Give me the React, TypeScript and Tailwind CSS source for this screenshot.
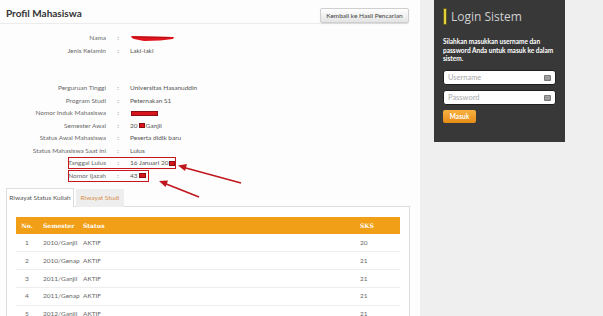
import React from "react";

function RedBlock({ w = 7 }: { w?: number }) {
  return (
    <span
      className="inline-block h-[5px] bg-[#d8141c] border border-[#8a0d12] align-middle mx-[1px]"
      style={{ width: w }}
    />
  );
}

function Scribble() {
  return (
    <svg width="46" height="9" viewBox="0 0 46 9" className="block">
      <path d="M1 2 L44 3 L43 5 L30 6.5 L14 7 L4 5 L2 4 Z" fill="#e0141c" />
      <path d="M3 3 L40 3.5" stroke="#b30e14" strokeWidth="1" />
    </svg>
  );
}

function InputIcon() {
  return (
    <svg width="7" height="6" viewBox="0 0 7 6">
      <rect x="0" y="0" width="7" height="6" rx="1" fill="#7a7a7a" />
      <rect x="1" y="1.5" width="5" height="0.8" fill="#cfcfcf" />
      <rect x="1" y="3.5" width="5" height="0.8" fill="#cfcfcf" />
    </svg>
  );
}

type Row = [string, React.ReactNode] | null;

const rows: Row[] = [
  ["Nama", <Scribble />],
  ["Jenis Kelamin", "Laki-laki"],
  null,
  null,
  ["Perguruan Tinggi", "Universitas Hasanuddin"],
  ["Program Studi", "Peternakan S1"],
  ["Nomor Induk Mahasiswa", <RedBlock w={27} />],
  [
    "Semester Awal",
    <>
      20
      <RedBlock w={6} />
      Ganjil
    </>,
  ],
  ["Status Awal Mahasiswa", "Peserta didik baru"],
  ["Status Mahasiswa Saat ini", "Lulus"],
  [
    "Tanggal Lulus",
    <>
      16 Januari 20
      <RedBlock w={6} />
    </>,
  ],
  [
    "Nomor Ijazah",
    <>
      43
      <RedBlock w={7} />
    </>,
  ],
];

const table = [
  ["1", "2010/Ganjil", "AKTIF", "20"],
  ["2", "2010/Genap", "AKTIF", "21"],
  ["3", "2011/Ganjil", "AKTIF", "21"],
  ["4", "2011/Genap", "AKTIF", "21"],
  ["5", "2012/Ganjil", "AKTIF", "21"],
];

export default function App() {
  return (
    <div className="flex w-[603px] h-[316px] overflow-hidden [font-family:Lato,'Open_Sans',sans-serif] bg-[#eeeeee]">
      {/* Left panel */}
      <div className="relative w-[420px] h-[316px] bg-[#fdfdfd] shrink-0">
        <div className="flex items-start">
          <div className="w-[320px] h-[24px] border-b border-[#ececec] pl-[6px] pt-[7px] text-[10px] leading-[12px] font-bold text-[#333]">
            Profil Mahasiswa
          </div>
          <div className="mt-[8px] w-[89px] h-[15px] border border-[#cfcfcf] rounded-[2px] bg-gradient-to-b from-[#ffffff] to-[#e4e4e4] shadow-[0_1px_1px_rgba(0,0,0,0.15)] flex items-center justify-center text-[6.5px] text-[#444]">
            Kembali ke Hasil Pencarian
          </div>
        </div>

        <div className="mt-[7.75px]">
          {rows.map((r, i) =>
            r ? (
              <div key={i} className="relative flex items-center h-[12.5px] text-[6.5px] text-[#6a6a6a]">
                <div className="w-[106px] text-right">{r[0]}</div>
                <div className="w-[24px] text-center">:</div>
                <div className="flex items-center text-[#555]">{r[1]}</div>
                {r[0] === "Tanggal Lulus" && (
                  <div className="absolute left-[68px] top-[0px] w-[108px] h-[12.5px] border-[1.5px] border-[#c4161c]" />
                )}
                {r[0] === "Nomor Ijazah" && (
                  <div className="absolute left-[68px] top-[0.5px] w-[81px] h-[12.5px] border-[1.5px] border-[#c4161c]" />
                )}
              </div>
            ) : (
              <div key={i} className="h-[12.5px]" />
            )
          )}
        </div>

        {/* Tabs */}
        <div className="mt-[6px] ml-[6px] w-[404px]">
          <div className="relative z-10 flex items-end h-[19px] -mb-px">
            <div className="h-[19px] w-[68px] border border-b-0 border-[#dddddd] bg-white flex items-center justify-center text-[6.5px] text-[#555]">
              Riwayat Status Kuliah
            </div>
            <div className="ml-[2px] h-[18px] w-[48px] bg-[#eeeeee] flex items-center justify-center text-[6.5px] text-[#d9904f]">
              Riwayat Studi
            </div>
          </div>
          <div className="border border-[#dddddd] px-[9px] pt-[10px] h-[200px] bg-white">
            <div className="flex h-[17px] items-center bg-[#f29f18] text-white text-[6px] font-bold [font-family:'DejaVu_Serif',serif]">
              <div className="w-[22px] text-center">No.</div>
              <div className="w-[40px] pl-[5px]">Semester</div>
              <div className="w-[277px] pl-[5px]">Status</div>
              <div className="w-[44px] pl-[5px]">SKS</div>
            </div>
            {table.map((t, i) => (
              <div
                key={i}
                className={`flex h-[17.7px] items-center text-[6.5px] text-[#666] ${i > 0 ? "border-t border-[#eeeeee]" : ""}`}
              >
                <div className="w-[22px] text-center">{t[0]}</div>
                <div className="w-[40px] pl-[5px]">{t[1]}</div>
                <div className="w-[277px] pl-[5px]">{t[2]}</div>
                <div className="w-[44px] pl-[5px]">{t[3]}</div>
              </div>
            ))}
          </div>
        </div>

        {/* Annotation arrows */}
        <svg className="absolute left-0 top-0 pointer-events-none" width="420" height="316">
          <line x1="241" y1="183" x2="184" y2="167.5" stroke="#c0161d" strokeWidth="1.6" />
          <polygon points="178,165.5 187,164 185,171" fill="#c0161d" />
          <line x1="199" y1="197" x2="165" y2="183.5" stroke="#c0161d" strokeWidth="1.6" />
          <polygon points="159,181 168,180.5 165.5,187" fill="#c0161d" />
        </svg>
      </div>

      {/* Right side */}
      <div className="flex-1 h-[316px] bg-[#efefef]">
        <div className="ml-[14px] w-[131px] h-[142px] bg-[#383838] pl-[9px] pr-[9px] pt-[8px]">
          <div className="flex items-center h-[17px]">
            <div className="w-[4px] h-[17px] bg-[#e3d03a] border border-[#5f5a1c]" />
            <div className="ml-[4px] text-[12px] leading-[17px] text-[#cfcfcf] [font-family:'Open_Sans',sans-serif]">
              Login Sistem
            </div>
          </div>
          <div className="mt-[13px] text-[6.5px] leading-[8.5px] font-bold text-white">
            Silahkan masukkan username dan password Anda untuk masuk ke dalam sistem.
          </div>
          <div className="mt-[6.5px] w-[113px] h-[15px] bg-white rounded-[3px] border border-[#1e1e1e] flex items-center justify-between px-[4px]">
            <span className="text-[7.5px] text-[#aaaaaa]">Username</span>
            <InputIcon />
          </div>
          <div className="mt-[5px] w-[113px] h-[15px] bg-white rounded-[3px] border border-[#1e1e1e] flex items-center justify-between px-[4px]">
            <span className="text-[7.5px] text-[#aaaaaa]">Password</span>
            <InputIcon />
          </div>
          <div className="mt-[5px] w-[33px] h-[13px] rounded-[2px] bg-gradient-to-b from-[#f8b140] to-[#e68c14] flex items-center justify-center text-[6.5px] font-bold text-white">
            Masuk
          </div>
        </div>
      </div>
    </div>
  );
}
